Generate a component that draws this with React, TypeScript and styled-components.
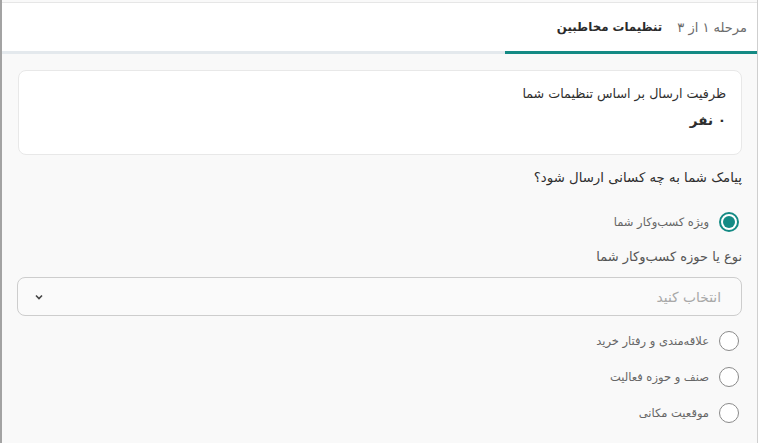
import React, { useState } from "react";
import styled, { createGlobalStyle } from "styled-components";

const Global = createGlobalStyle`
  html, body { margin: 0; padding: 0; background: #ffffff; }
  body { font-family: "DejaVu Sans", "Noto Sans", sans-serif; }
  * { box-sizing: border-box; }
`;

const Frame = styled.div`
  width: 758px;
  height: 443px;
  direction: rtl;
  background: #f9f9f9;
  border-left: 2px solid #a3a3a3;
  border-right: 1px solid #cfcfcf;
  overflow: hidden;
  display: flex;
  flex-direction: column;
`;

const Header = styled.div`
  height: 52px;
  margin-top: 2px;
  background: #fff;
  border-top: 1px solid #e6e6e6;
  display: flex;
  align-items: stretch;
  box-shadow: inset 0 -3px 0 #e4e9ed;
`;

const Tab = styled.div`
  width: 252px;
  display: flex;
  align-items: center;
  gap: 15px;
  padding: 0 10px 0 0;
  border-bottom: 3px solid #148a84;
`;

const Step = styled.span`
  font-size: 13px;
  color: #6b6b6b;
`;

const TabTitle = styled.span`
  font-size: 11.8px;
  font-weight: 700;
  color: #2b2b2b;
`;

const Body = styled.div`
  padding: 16px 15px 0 16px;
  display: flex;
  flex-direction: column;
`;

const Card = styled.div`
  height: 85px;
  background: #fff;
  border: 1px solid #e8e8e8;
  border-radius: 8px;
  padding: 13px 15px 0;
  display: flex;
  flex-direction: column;
  gap: 6px;
`;

const CardLine = styled.div<{ $strong?: boolean }>`
  font-size: ${(p) => (p.$strong ? "13.5px" : "12.7px")};
  font-weight: ${(p) => (p.$strong ? 700 : 500)};
  color: #2e2e2e;
  line-height: 20px;
`;

const Question = styled.div<{ $muted?: boolean; $size: number }>`
  font-size: ${(p) => p.$size}px;
  font-weight: 500;
  color: ${(p) => (p.$muted ? "#555" : "#2e2e2e")};
  line-height: 20px;
`;

const RadioRow = styled.label`
  display: flex;
  align-items: center;
  gap: 10px;
  padding-right: 3px;
  cursor: pointer;
`;

const Circle = styled.span<{ $on?: boolean }>`
  width: 20px;
  height: 20px;
  border-radius: 50%;
  border: ${(p) => (p.$on ? "2px solid #148a84" : "1px solid #8a8a8a")};
  background: #fff;
  display: flex;
  align-items: center;
  justify-content: center;
  flex-shrink: 0;
  &::after {
    content: "";
    width: 12px;
    height: 12px;
    border-radius: 50%;
    background: ${(p) => (p.$on ? "#148a84" : "transparent")};
  }
`;

const RadioLabel = styled.span`
  font-size: 11.5px;
  color: #666;
`;

const Select = styled.div`
  height: 39px;
  border: 1px solid #cdcdcd;
  border-radius: 8px;
  background: #fafafa;
  display: flex;
  align-items: center;
  justify-content: space-between;
  padding: 0 20px 0 16px;
  margin-left: -1px;
`;

const Placeholder = styled.span`
  font-size: 13.8px;
  color: #a8a8a8;
`;

const Chevron = () => (
  <svg width="10" height="8" viewBox="0 0 10 8">
    <path d="M2 2.5 L5 5.5 L8 2.5" fill="none" stroke="#444" strokeWidth="1.6" />
  </svg>
);

const Section = styled.div<{ $top: number }>`
  margin-top: ${(p) => p.$top}px;
`;

export default function App() {
  const [sel, setSel] = useState("biz");
  const opts = [
    { id: "interest", label: "علاقه‌مندی و رفتار خرید" },
    { id: "guild", label: "صنف و حوزه فعالیت" },
    { id: "loc", label: "موقعیت مکانی" },
  ];
  return (
    <>
      <Global />
      <Frame>
        <Header>
          <Tab>
            <Step>مرحله ۱ از ۳</Step>
            <TabTitle>تنظیمات مخاطبین</TabTitle>
          </Tab>
        </Header>
        <Body>
          <Card>
            <CardLine>ظرفیت ارسال بر اساس تنظیمات شما</CardLine>
            <CardLine $strong>۰ نفر</CardLine>
          </Card>
          <Section $top={13}>
            <Question $size={13.3}>پیامک شما به چه کسانی ارسال شود؟</Question>
          </Section>
          <Section $top={24}>
            <RadioRow onClick={() => setSel("biz")}>
              <Circle $on={sel === "biz"} />
              <RadioLabel>ویژه کسب‌وکار شما</RadioLabel>
            </RadioRow>
          </Section>
          <Section $top={15}>
            <Question $muted $size={13}>نوع یا حوزه کسب‌وکار شما</Question>
          </Section>
          <Section $top={10}>
            <Select>
              <Placeholder>انتخاب کنید</Placeholder>
              <Chevron />
            </Select>
          </Section>
          <Section $top={15}>
            {opts.map((o, i) => (
              <Section key={o.id} $top={i === 0 ? 0 : 16}>
                <RadioRow onClick={() => setSel(o.id)}>
                  <Circle $on={sel === o.id} />
                  <RadioLabel>{o.label}</RadioLabel>
                </RadioRow>
              </Section>
            ))}
          </Section>
        </Body>
      </Frame>
    </>
  );
}
